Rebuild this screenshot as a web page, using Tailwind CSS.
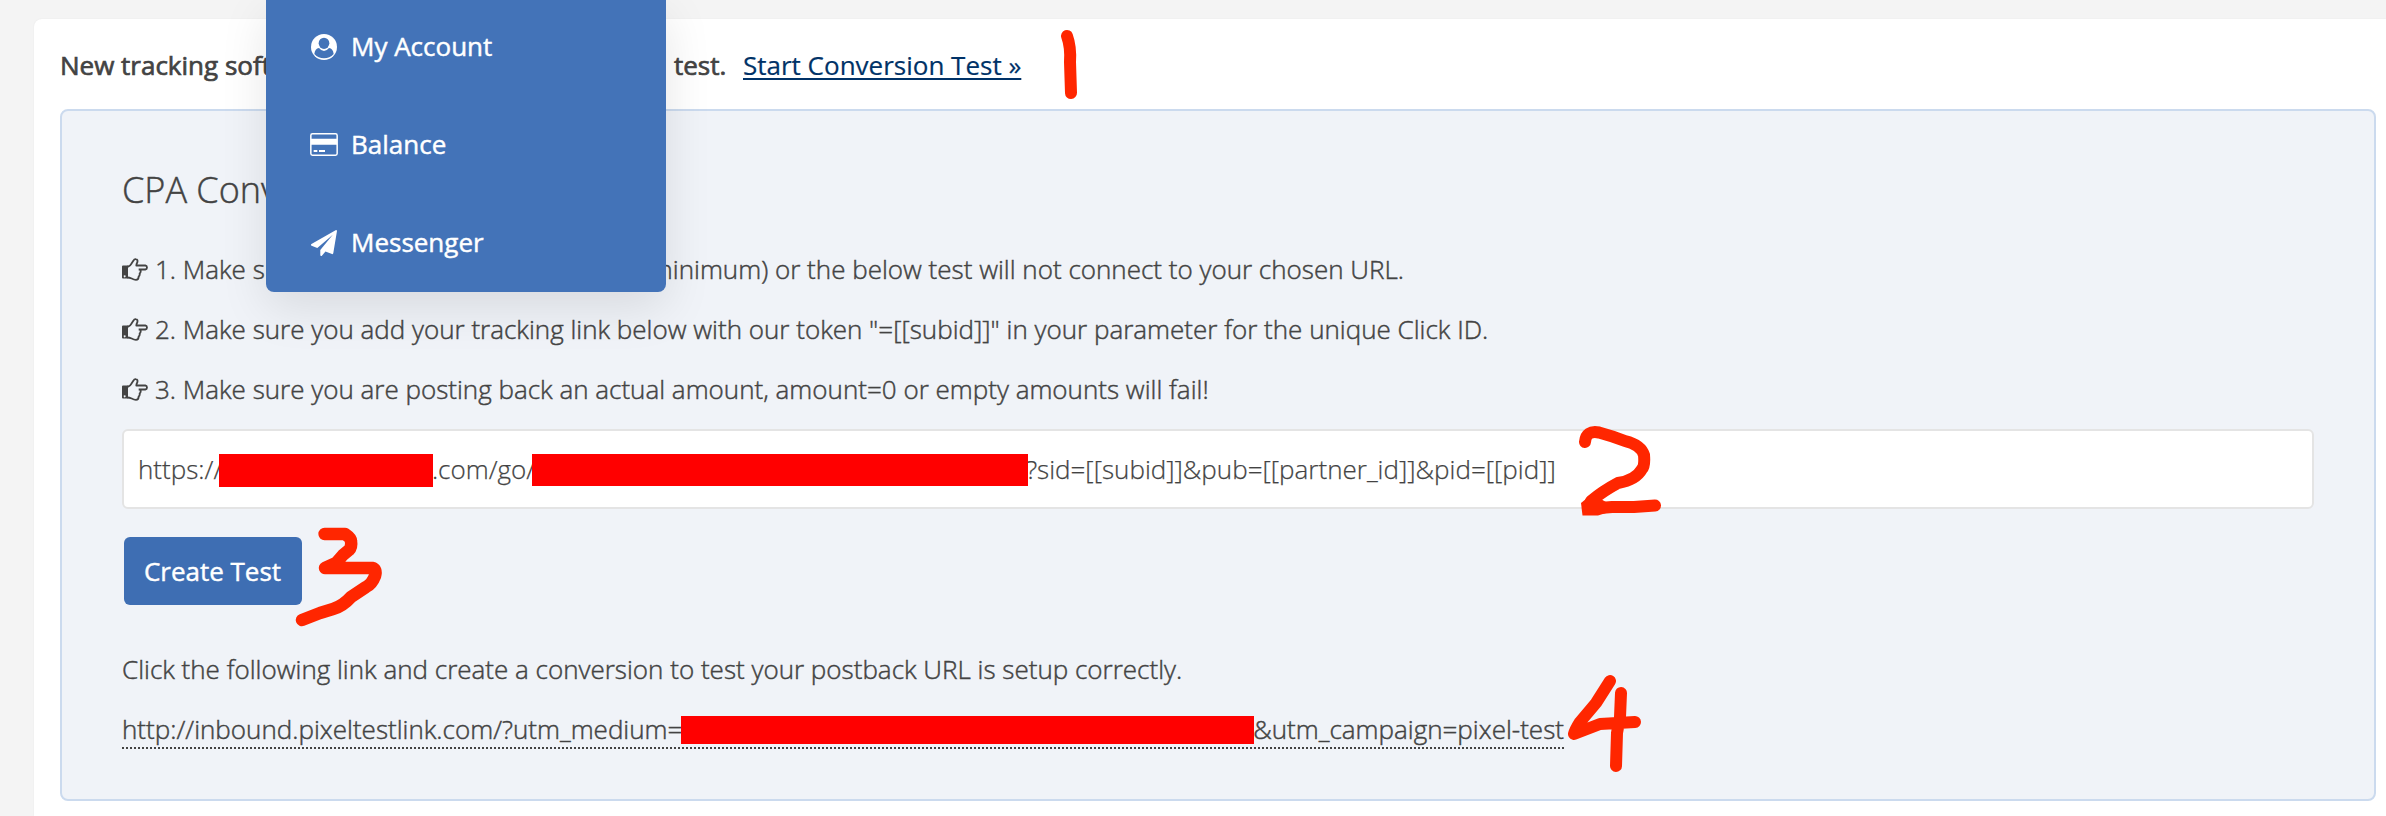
<!DOCTYPE html>
<html lang="en">
<head>
<meta charset="utf-8">
<title>CPA Conversion Test</title>
<script src="https://cdn.jsdelivr.net/npm/@tailwindcss/browser@4"></script>
</head>
<body class="relative h-[816px] overflow-hidden bg-[#f4f4f4] pl-[34px] pt-[19px] font-['Open_Sans',sans-serif] text-[26px] leading-[60px] text-[#434343] [-webkit-text-stroke:0.45px]">
<svg class="hidden">
  <symbol id="hand" viewBox="0 0 78 68">
    <path fill="currentColor" fill-rule="evenodd" d="M3 22H18V61H3Q0 61 0 58V25Q0 22 3 22ZM8 51a3 3 0 1 0 .1 0Z"/>
    <path fill="none" stroke="currentColor" stroke-width="5.5" stroke-linejoin="round" d="M16 25H19Q24 24 28 17L34 8Q37 2 42 3Q48 4 46 12Q43 17 43 22H70Q75 23 75 28Q75 33 70 34H55Q58 41 53 46Q54 52 50 55Q50 65 42 65Q36 65 29 61Q22 58 16 58M55 34H50"/>
  </symbol>
</svg>

<main class="h-[797px] rounded-tl-lg bg-white pl-[26px] pr-[10px] pt-4 shadow-[0_0_2px_rgba(0,0,0,0.06)]">
  <div class="flex h-[60px] whitespace-pre">
    <span class="w-[614px] [-webkit-text-stroke:0.7px]">New tracking software</span>
    <span class="w-[69px] [-webkit-text-stroke:0.7px]">test.</span>
    <a href="#" class="text-[#003267] underline decoration-2 underline-offset-[3px] [-webkit-text-stroke:0.2px] [text-decoration-skip-ink:none]">Start Conversion Test »</a>
  </div>

  <section class="mt-[14px] h-[692px] rounded-lg border-2 border-[#cbdaee] bg-[#f0f3f8] px-[60px] pt-[49px] font-light">
    <h2 class="mb-[19px] text-4xl font-light leading-[60px]">CPA Conversion Test</h2>

    <div class="flex h-[60px] w-[1282px] items-center">
      <svg class="mr-[7px] mt-px h-[23px] w-[26px]"><use href="#hand"/></svg>
      <span>1. Make sure</span>
      <span class="ml-auto">(minimum) or the below test will not connect to your chosen URL.</span>
    </div>
    <div class="flex h-[60px] items-center">
      <svg class="mr-[7px] mt-px h-[23px] w-[26px]"><use href="#hand"/></svg>
      <span>2. Make sure you add your tracking link below with our token "=[[subid]]" in your parameter for the unique Click ID.</span>
    </div>
    <div class="flex h-[60px] items-center">
      <svg class="mr-[7px] mt-px h-[23px] w-[26px]"><use href="#hand"/></svg>
      <span>3. Make sure you are posting back an actual amount, amount=0 or empty amounts will fail!</span>
    </div>

    <div class="mt-[10px] flex h-20 items-center rounded-md border-2 border-[#e4e4e4] bg-white px-[14px] [-webkit-text-stroke:0.25px]">
      <span>https://</span>
      <span class="relative -ml-[3.2px] -mr-[1.2px] mt-[3px] h-[33px] w-[214px] bg-[#ff0000]"></span>
      <span>.com/go/</span>
      <span class="relative -ml-[3px] -mr-[2px] mt-[2px] h-8 w-[496px] bg-[#ff0000]"></span>
      <span>?sid=[[subid]]&amp;pub=[[partner_id]]&amp;pid=[[pid]]</span>
    </div>

    <button class="ml-[2px] mt-[28px] block h-[68px] w-[178px] rounded-md bg-[#3e6eb3] pr-px text-center font-normal leading-[68px] text-white">Create Test</button>

    <p class="mt-[34px]">Click the following link and create a conversion to test your postback URL is setup correctly.</p>
    <a href="#" class="flex h-[50px] w-fit border-b-2 border-dotted border-[#434343]">
      <span>http://inbound.pixeltestlink.com/?utm_medium=</span>
      <span class="relative -ml-[1.4px] -mr-[0.8px] mt-[17px] h-7 w-[573px] bg-[#ff0000]"></span>
      <span>&amp;utm_campaign=pixel-test</span>
    </a>
  </section>
</main>

<!-- Account dropdown -->
<nav class="absolute left-[266px] top-0 flex h-[292px] w-[400px] flex-col rounded-b-lg bg-[#4373b8] pl-[44px] leading-[98px] text-white shadow-[0_16px_48px_rgba(0,0,0,0.1)]">
  <a href="#" class="-mt-[3px] flex h-[98px] shrink-0 items-center">
    <svg class="ml-px mr-[14px] mt-px h-[26px] w-[26px]" viewBox="0 0 78 78"><circle cx="39" cy="39" r="39" fill="#fff"/><ellipse cx="39" cy="28" rx="16" ry="17" fill="#4373b8"/><path fill="#4373b8" d="M10 60Q12 44 24 42Q31 51 39 51Q47 51 54 42Q66 44 68 60Q56 73 39 73Q22 73 10 60Z"/></svg>
    My Account
  </a>
  <a href="#" class="flex h-[98px] shrink-0 items-center">
    <svg class="mr-[13px] h-[23px] w-[28px]" viewBox="0 0 84 69"><rect x="2.5" y="2.5" width="79" height="64" rx="5" fill="none" stroke="#fff" stroke-width="4.5"/><path fill="#fff" d="M3 17H81V35H3ZM11 51H22V57H11ZM27 51H45V57H27Z"/></svg>
    Balance
  </a>
  <a href="#" class="flex h-[98px] shrink-0 items-center">
    <svg class="ml-px mr-[14px] mt-px h-[26px] w-[26px]" viewBox="0 0 1792 1792"><path fill="#fff" d="M1764 11q33 24 27 64l-256 1536q-5 29-32 45-14 8-31 8-11 0-24-5l-453-185-242 295q-18 23-49 23-13 0-22-4-19-7-30.500-23.500t-11.500-36.500v-349l864-1059-1069 925-395-162q-37-14-40-55-2-40 32-59l1664-960q15-9 32-9 20 0 36 11z"/></svg>
    Messenger
  </a>
</nav>

<!-- Hand-drawn step markers -->
<svg class="pointer-events-none absolute left-0 top-0 h-[816px] w-[2386px]" viewBox="0 0 2386 816" fill="none" stroke="#ff2600" stroke-width="12" stroke-linecap="round" stroke-linejoin="round">
  <path d="M1067 36Q1071 47 1070 62L1071 93"/>
  <path d="M1585 442Q1586 430 1599 432.500Q1612 436 1625 441Q1641 445 1644 455Q1645 466 1642 469Q1636 480 1618 483Q1603 491 1591 501L1588 509L1612 507L1634 507L1655 505.500"/>
  <path fill="#ff2600" stroke="none" d="M1581 503L1592 494L1606 502V513L1598 515.500H1582.500Z"/>
  <path stroke-width="12.500" d="M324.600 534H345Q351 538 351 541Q352 547 349 550L343 555L336 563L325 568H372Q377 569 375 576Q372 584 366 587L351 597Q343 606 333 609L320 613L302 620"/>
  <path d="M1610 681L1596 703L1580 722Q1575 730 1574 734L1600 724L1635 722M1621 693L1620 717L1617 733L1616 766"/>
</svg>
</body>
</html>
